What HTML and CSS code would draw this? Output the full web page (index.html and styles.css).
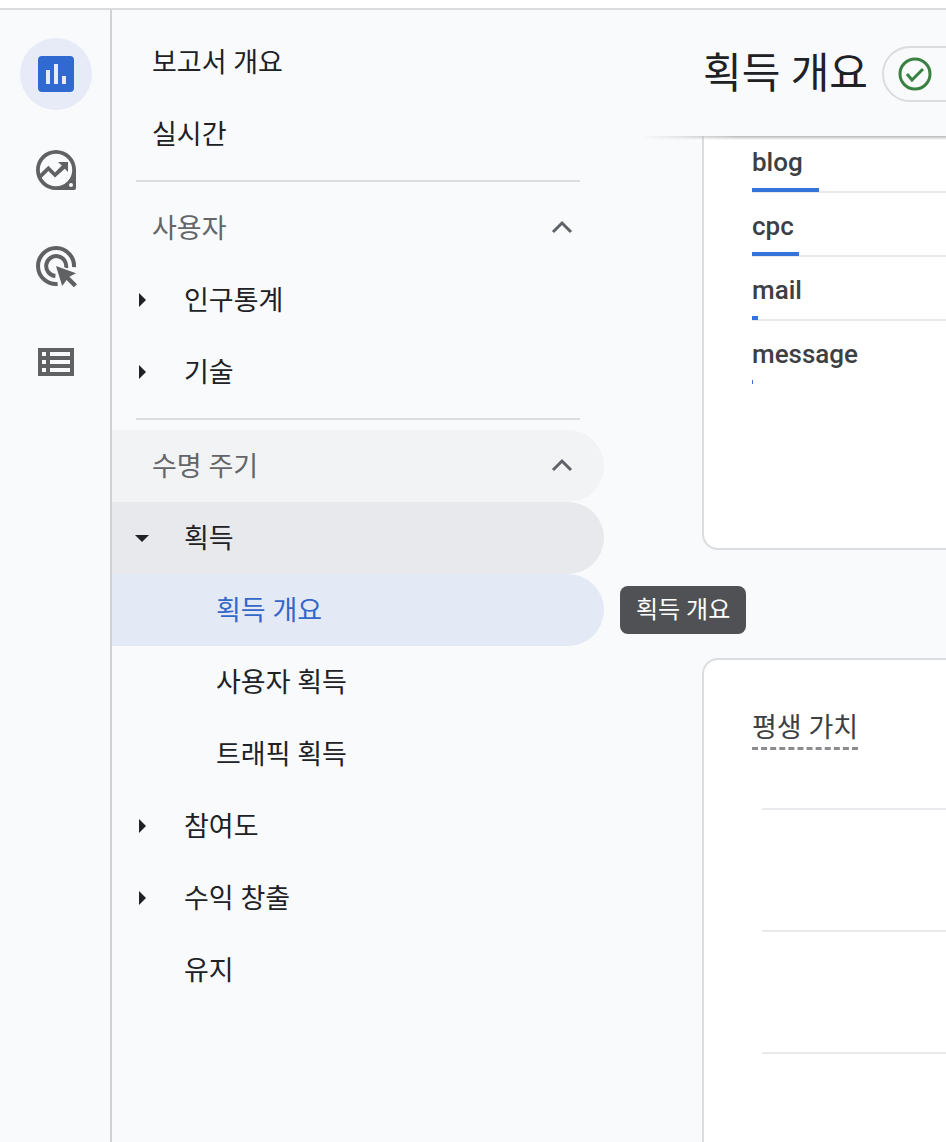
FILE: index.html
```html
<!DOCTYPE html>
<html lang="ko">
<head>
<meta charset="utf-8">
<meta name="viewport" content="width=device-width, initial-scale=1">
<title>획득 개요</title>
<link rel="stylesheet" href="styles.css">
</head>
<body>
<div class="topbar"></div>
<div class="shell">
  <nav class="rail" aria-label="주 메뉴">
    <a class="rail-link is-active" href="#" aria-label="보고서">
      <svg class="rail-icon" viewBox="0 0 48 48"><path fill-rule="evenodd" d="M10 6h28a4 4 0 0 1 4 4v28a4 4 0 0 1-4 4H10a4 4 0 0 1-4-4V10a4 4 0 0 1 4-4zM14 20v14h4V20zM22 14v20h4V14zM30 26v8h4v-8z"/></svg>
    </a>
    <a class="rail-link" href="#" aria-label="탐색">
      <svg class="rail-icon" viewBox="0 0 48 48"><path fill-rule="evenodd" d="M24 4a20 20 0 0 1 20 20v18a2 2 0 0 1-2 2H24a20 20 0 0 1 0-40zM24 7.8a16.2 16.2 0 1 0 0 32.4a16.2 16.2 0 0 0 0-32.4zM39 37a2 2 0 1 0 0 4a2 2 0 0 0 0-4z"/><path d="M26 16h10v10l-3.2-3.2-9.8 8.8-6.6-6.6-7 7-2-3.6 9-8.6 6.6 6.6 6.8-6.8z"/></svg>
    </a>
    <a class="rail-link" href="#" aria-label="광고">
      <svg class="rail-icon" viewBox="0 0 48 48"><path class="stroke" d="M42 25.2A18 18 0 1 0 25.6 42M34 26A10 10 0 1 0 23.4 34"/><path class="pointer" d="M24 24l20 7.2-6.6 3.6 7.6 7.4-3.2 3-7.2-7.2-4.4 6z"/></svg>
    </a>
    <a class="rail-link" href="#" aria-label="구성">
      <svg class="rail-icon" viewBox="0 0 48 48"><path fill-rule="evenodd" d="M6 10h36v28H6zM10 14v4h4v-4zM18 14v4h20v-4zM10 22v4h4v-4zM18 22v4h20v-4zM10 30v4h4v-4zM18 30v4h20v-4z"/></svg>
    </a>
  </nav>

  <nav class="sidenav" aria-label="보고서 메뉴">
    <a class="item" href="#">보고서 개요</a>
    <a class="item" href="#">실시간</a>
    <hr class="divider">
    <button class="item group" type="button" aria-expanded="true">사용자
      <svg class="chevron" viewBox="0 0 24 24"><path d="M3 17l9-9 9 9"/></svg>
    </button>
    <a class="item child" href="#"><svg class="caret" viewBox="0 0 16 16"><path d="M5 1v14l7-7z"/></svg>인구통계</a>
    <a class="item child" href="#"><svg class="caret" viewBox="0 0 16 16"><path d="M5 1v14l7-7z"/></svg>기술</a>
    <hr class="divider">
    <button class="item group is-hovered" type="button" aria-expanded="true">수명 주기
      <svg class="chevron" viewBox="0 0 24 24"><path d="M3 17l9-9 9 9"/></svg>
    </button>
    <a class="item child is-open" href="#"><svg class="caret" viewBox="0 0 16 16"><path d="M1 5h14l-7 7z"/></svg>획득</a>
    <a class="item leaf is-selected" href="#" aria-current="page">획득 개요<span class="tooltip" role="tooltip">획득 개요</span></a>
    <a class="item leaf" href="#">사용자 획득</a>
    <a class="item leaf" href="#">트래픽 획득</a>
    <a class="item child" href="#"><svg class="caret" viewBox="0 0 16 16"><path d="M5 1v14l7-7z"/></svg>참여도</a>
    <a class="item child" href="#"><svg class="caret" viewBox="0 0 16 16"><path d="M5 1v14l7-7z"/></svg>수익 창출</a>
    <a class="item child plain" href="#">유지</a>
  </nav>

  <main class="report">
    <header class="report-header">
      <h1 class="title">획득 개요</h1>
      <button class="status" type="button" aria-label="데이터 상태">
        <svg class="status-icon" viewBox="0 0 34 34"><circle cx="17" cy="17" r="15"/><path d="M9 17l5 6 11-11"/></svg>
      </button>
    </header>
    <section class="card sources">
      <table class="source-table">
        <tbody>
          <tr><th scope="row">blog<span class="bar" style="width:67px"></span></th></tr>
          <tr><th scope="row">cpc<span class="bar" style="width:47px"></span></th></tr>
          <tr><th scope="row">mail<span class="bar" style="width:6px"></span></th></tr>
          <tr><th scope="row">message<span class="bar" style="width:1px"></span></th></tr>
        </tbody>
      </table>
    </section>
    <section class="card lifetime">
      <h2 class="card-title">평생 가치</h2>
      <div class="plot">
        <div class="gridline"></div>
        <div class="gridline"></div>
        <div class="gridline"></div>
      </div>
    </section>
  </main>
</div>
</body>
</html>
```
FILE: styles.css
```css
* {
  box-sizing: border-box;
}

body {
  margin: 0;
  height: 100vh;
  display: flex;
  flex-direction: column;
  overflow: hidden;
  background: #f9fafc;
  color: #202124;
  font-family: Roboto, "Noto Sans CJK KR", sans-serif;
  font-size: 27px;
}

a {
  color: inherit;
  text-decoration: none;
}

button {
  margin: 0;
  border: 0;
  background: none;
  font: inherit;
  cursor: pointer;
}

.topbar {
  flex: none;
  height: 10px;
  background: #fff;
  border-bottom: 2px solid #dadce0;
}

.shell {
  flex: 1;
  min-height: 0;
  display: flex;
}

/* Icon rail */

.rail {
  flex: none;
  width: 112px;
  padding: 28px 18px 0 20px;
  border-right: 2px solid #d0d2d4;
  display: flex;
  flex-direction: column;
  gap: 24px;
}

.rail-link {
  width: 72px;
  height: 72px;
  border-radius: 50%;
  display: grid;
  place-items: center;
  color: #5f6163;
}

.rail-link.is-active {
  background: #e7ebf8;
  color: #3069d0;
}

.rail-icon {
  width: 48px;
  height: 48px;
  fill: currentColor;
}

.rail-icon .stroke {
  fill: none;
  stroke: currentColor;
  stroke-width: 4;
}

.rail-icon .pointer {
  stroke: #f9fafc;
  stroke-width: 3;
  paint-order: stroke;
}

/* Report navigation */

.sidenav {
  flex: none;
  width: 492px;
  padding-top: 16px;
}

.item {
  position: relative;
  width: 100%;
  height: 72px;
  padding: 0 30px 4px 40px;
  border-radius: 0 36px 36px 0;
  display: flex;
  align-items: center;
  text-align: left;
}

.divider {
  height: 2px;
  margin: 10px 24px;
  border: 0;
  background: #dadce0;
}

.group {
  justify-content: space-between;
  color: #636568;
}

.chevron {
  width: 24px;
  height: 24px;
  margin-top: 2px;
  fill: none;
  stroke: #5f6368;
  stroke-width: 3;
}

.child {
  padding-left: 22px;
  gap: 34px;
}

.caret {
  width: 16px;
  height: 16px;
  margin-top: 4px;
  fill: #202124;
}

.plain {
  padding-left: 72px;
}

.leaf {
  padding-left: 104px;
}

.is-hovered {
  background: #f1f3f4;
}

.is-open {
  background: #e8e9ec;
}

.is-selected {
  background: #e3eaf6;
  color: #3367c8;
}

.tooltip {
  position: absolute;
  left: calc(100% + 16px);
  top: 12px;
  z-index: 3;
  padding: 0 16px;
  border-radius: 8px;
  background: #505154;
  color: #fff;
  font-size: 24px;
  line-height: 48px;
  white-space: nowrap;
}

/* Report */

.report {
  flex: 1;
  min-width: 0;
  margin-left: 36px;
  overflow: hidden;
}

.report-header {
  position: relative;
  z-index: 2;
  height: 126px;
  padding: 2px 0 0 63px;
  background: #f9fafc;
  display: flex;
  align-items: center;
  gap: 14px;
}

.report-header::after {
  content: "";
  position: absolute;
  top: 100%;
  left: 0;
  right: 0;
  height: 4px;
  background: linear-gradient(#b8b9ba, rgba(200, 200, 200, 0));
  mask-image: linear-gradient(to right, transparent, #000 96px);
}

.title {
  flex: none;
  margin: 0;
  font-size: 42px;
  font-weight: 400;
  line-height: 56px;
}

.status {
  flex: none;
  width: 240px;
  height: 56px;
  padding: 0 14px;
  border: 2px solid #dadce0;
  border-radius: 28px;
  display: flex;
  align-items: center;
}

.status-icon {
  width: 34px;
  height: 34px;
  fill: none;
  stroke: #398140;
  stroke-width: 3;
}

.card {
  margin-left: 62px;
  margin-right: -24px;
  border: 2px solid #dadce0;
  border-radius: 16px;
  background: #fff;
  color: #3c4043;
}

.sources {
  height: 430px;
  margin-top: -16px;
  padding: 7px 0 0 48px;
}

.source-table {
  width: 100%;
  border-spacing: 0;
}

.source-table th {
  height: 64px;
  padding: 7px 0 0;
  border-bottom: 2px solid #e8eaed;
  font-size: 26px;
  font-weight: 500;
  line-height: 52px;
  text-align: left;
}

.source-table tr:last-child th {
  border-color: transparent;
}

.bar {
  display: block;
  height: 4px;
  margin-bottom: -1px;
  background: #3573d9;
}

.lifetime {
  height: 640px;
  margin-top: 108px;
  padding: 50px 0 0 48px;
}

.card-title {
  width: fit-content;
  margin: 0;
  border-bottom: 3px dashed #8a8c8f;
  font-size: 27px;
  font-weight: 400;
  line-height: 37px;
}

.plot {
  margin: 58px 0 0 10px;
  display: grid;
  gap: 120px;
}

.gridline {
  height: 2px;
  background: #e8eaed;
}
```
